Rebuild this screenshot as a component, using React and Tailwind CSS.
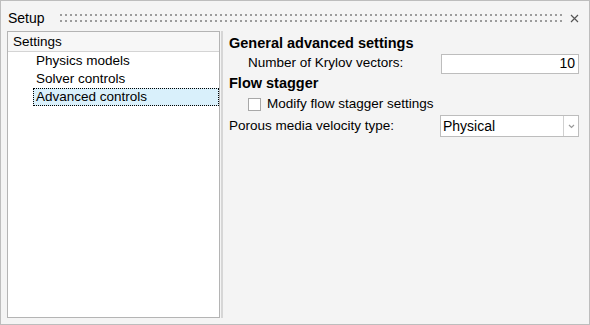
import React from "react";

const TreeItem = ({ label, selected }) => (
  <div
    className={
      "h-[18px] flex items-center pl-[2px] pt-[1px] ml-[25px] " +
      (selected ? "bg-[#d9f0fb] border border-dotted border-black" : "border border-transparent")
    }
  >
    {label}
  </div>
);

const App = () => {
  return (
    <div
      className="w-[590px] h-[325px] bg-[#f4f4f4] border border-[#bdbdbd] flex flex-col text-[13.5px] text-black"
      style={{ fontFamily: '"Liberation Sans", Arial, sans-serif' }}
    >
      <div className="h-[30px] flex items-center pt-[5px] pl-[7px] pr-[9px]">
        <span className="text-[14px] w-[52px]">Setup</span>
        <div className="flex-1 h-[8px] mt-[-1px] mr-[8px] bg-[radial-gradient(circle_at_1px_1px,#9c9c9c_1.1px,transparent_1.3px)] bg-[length:5px_6px]" />
        <svg width="9" height="9" viewBox="0 0 9 9" className="mr-[1px] mt-[-1px]">
          <path d="M1 1L8 8M8 1L1 8" stroke="#555" strokeWidth="1.2" />
        </svg>
      </div>

      <div className="flex-1 flex pl-[6px] pb-[6px]">
        <div className="w-[213px] border border-[#b4b4b4] bg-white flex flex-col">
          <div className="h-[20px] flex items-center pl-[5px] pt-[1px] bg-[#f7f7f7] border-b border-[#d4d4d4]">Settings</div>
          <TreeItem label="Physics models" />
          <TreeItem label="Solver controls" />
          <TreeItem label="Advanced controls" selected />
        </div>
        <div className="w-[3px] ml-[1px] border-l-2 border-[#d6d6d6]" />

        <div className="flex-1 flex flex-col pl-[5px] pr-[10px] pt-[4px]">
          <div className="h-[18px] flex items-center font-bold text-[14.5px]">General advanced settings</div>
          <div className="h-[21px] flex items-center">
            <span className="flex-1 pl-[19px]">Number of Krylov vectors:</span>
            <div className="w-[138px] h-[20px] bg-white border border-[#bdbdbd] flex items-center justify-end pr-[3px] text-[14px]">10</div>
          </div>
          <div className="h-[20px] flex items-center font-bold text-[14.5px]">Flow stagger</div>
          <div className="h-[20px] flex items-center pl-[19px]">
            <div className="w-[13px] h-[13px] bg-white border border-[#a8a8a8] mr-[6px]" />
            <span>Modify flow stagger settings</span>
          </div>
          <div className="h-[24px] flex items-center">
            <span className="flex-1">Porous media velocity type:</span>
            <div className="w-[139px] h-[22px] bg-white border border-[#bdbdbd] flex items-stretch text-[14px]">
              <span className="flex-1 flex items-center pl-[2px]">Physical</span>
              <div className="w-[15px] border-l border-[#d0d0d0] flex items-center justify-center">
                <svg width="7" height="5" viewBox="0 0 7 5">
                  <path d="M1 1L3.5 3.5L6 1" stroke="#9a9a9a" strokeWidth="1.2" fill="none" />
                </svg>
              </div>
            </div>
          </div>
        </div>
      </div>
    </div>
  );
};

export default App;
